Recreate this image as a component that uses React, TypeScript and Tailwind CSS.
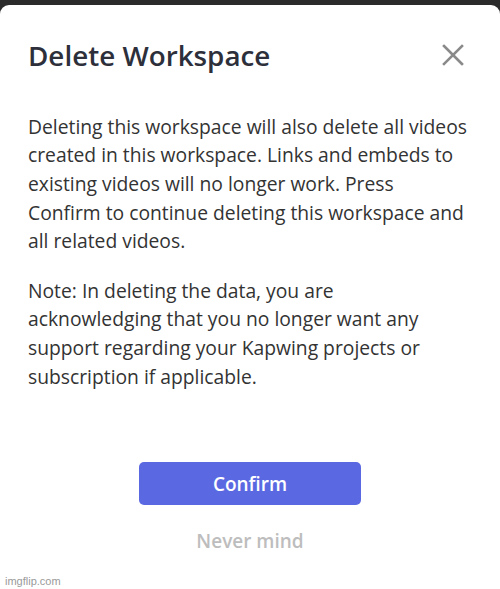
export default function App() {
  return (
    <div className="w-[500px] h-[589px] bg-[#2b2b2b] pt-[5px] overflow-hidden" style={{ fontFamily: '"Open Sans", "Noto Sans", sans-serif' }}>
      <div className="relative h-[600px] bg-white rounded-t-[9px] px-[28px]">
        {/* Header */}
        <div className="flex items-center justify-between pt-[31px]">
          <h1 className="text-[27.8px] leading-[38px] font-semibold text-[#2d303b]">Delete Workspace</h1>
          <button className="text-[#8a8a8a] mr-[8px]">
            <svg width="22" height="22" viewBox="0 0 22 22" fill="none" stroke="currentColor" strokeWidth="2.6" strokeLinecap="square">
              <path d="M2 2L20 20M20 2L2 20" />
            </svg>
          </button>
        </div>

        {/* Body */}
        <div className="mt-[38.6px] text-[19.3px] leading-[28.7px] text-[#333333] whitespace-nowrap">
          <p>
            Deleting this workspace will also delete all videos
            <br />
            created in this workspace. Links and embeds to
            <br />
            existing videos will no longer work. Press
            <br />
            Confirm to continue deleting this workspace and
            <br />
            all related videos.
          </p>
          <p className="mt-[20.5px]">
            Note: In deleting the data, you are
            <br />
            acknowledging that you no longer want any
            <br />
            support regarding your Kapwing projects or
            <br />
            subscription if applicable.
          </p>
        </div>

        {/* Actions */}
        <div className="flex flex-col items-center mt-[70.6px]">
          <button className="w-[222px] h-[43px] rounded-[5px] bg-[#5a69e2] text-white text-[19px] leading-[26px] font-semibold">Confirm</button>
          <button className="mt-[23px] text-[19px] leading-[26px] font-semibold text-[#bdbdbd]">Never mind</button>
        </div>

        <span className="absolute left-[5px] top-[568px] text-[11px] text-[#9a9a9a]" style={{ fontFamily: '"Liberation Sans", Arial, sans-serif' }}>
          imgflip.com
        </span>
      </div>
    </div>
  );
}
